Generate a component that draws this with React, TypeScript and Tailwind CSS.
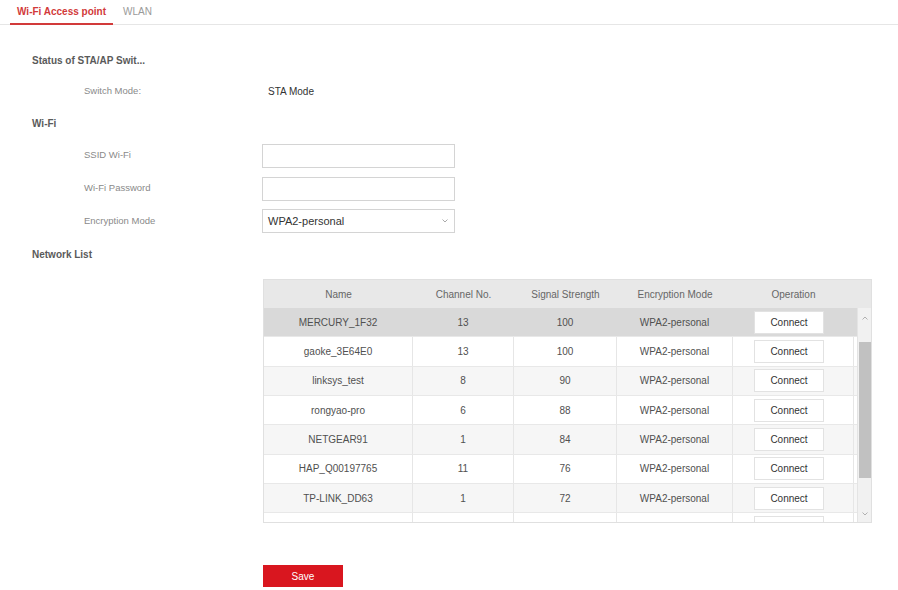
import React from "react";

const rows = [
  ["MERCURY_1F32", "13", "100"],
  ["gaoke_3E64E0", "13", "100"],
  ["linksys_test", "8", "90"],
  ["rongyao-pro", "6", "88"],
  ["NETGEAR91", "1", "84"],
  ["HAP_Q00197765", "11", "76"],
  ["TP-LINK_DD63", "1", "72"],
  ["", "", ""],
];

function Row({ r, i }: { r: string[]; i: number }) {
  const bg = i === 0 ? "bg-[#d9d9d9]" : i % 2 === 0 ? "bg-[#f6f6f6]" : "bg-white";
  const sep = i === 0 ? "border-r border-transparent" : "border-r border-[#e6e6e6]";
  return (
    <div className={`flex h-[29.33px] shrink-0 border-b border-[#e8e8e8] text-[10px] text-[#505050] ${bg}`}>
      <div className={`w-[149px] flex items-center justify-center ${sep}`}>{r[0]}</div>
      <div className={`w-[101px] flex items-center justify-center ${sep}`}>{r[1]}</div>
      <div className={`w-[103px] flex items-center justify-center ${sep}`}>{r[2]}</div>
      <div className={`w-[116px] flex items-center justify-center ${sep}`}>{r[0] ? "WPA2-personal" : ""}</div>
      <div className={`w-[121px] flex items-center pl-[21px] ${sep}`}>
        <div className="w-[70px] h-[23px] bg-white border border-[#e2e2e2] flex items-center justify-center text-[10px] text-[#333]">
          {r[0] ? "Connect" : ""}
        </div>
      </div>
      <div className="flex-1" />
    </div>
  );
}

export default function App() {
  return (
    <div className="w-[898px] h-[590px] bg-white overflow-hidden" style={{ fontFamily: '"Liberation Sans", Arial, sans-serif' }}>
      {/* tabs */}
      <div className="h-[25px] flex items-end border-b border-[#e6e6e6]">
        <div className="ml-[10px] w-[103px] h-[25px] flex items-center justify-center text-[10px] font-bold text-[#d23a3a] border-b-2 border-[#d23a3a] -mb-px">
          Wi-Fi Access point
        </div>
        <div className="ml-[10px] h-[25px] flex items-center text-[10px] text-[#9a9a9a]">WLAN</div>
      </div>

      <div className="pl-[32px] pt-[19px] text-[10px]">
        <div className="h-[32px] flex items-center font-bold text-[#5a5a5a]">Status of STA/AP Swit...</div>
        <div className="h-[31px] flex items-center">
          <div className="w-[230px] pl-[52px] text-[#8a8a8a] text-[9.5px]">Switch Mode:</div>
          <div className="pl-[6px] text-[#333]">STA Mode</div>
        </div>
        <div className="h-[32px] flex items-center font-bold text-[#5a5a5a]">Wi-Fi</div>
        <div className="h-[33px] flex items-center">
          <div className="w-[230px] pl-[52px] text-[#8a8a8a] text-[9.5px]">SSID Wi-Fi</div>
          <div className="w-[193px] h-[24px] border border-[#d4d4d4] bg-white" />
        </div>
        <div className="h-[33px] flex items-center">
          <div className="w-[230px] pl-[52px] text-[#8a8a8a] text-[9.5px]">Wi-Fi Password</div>
          <div className="w-[193px] h-[24px] border border-[#d4d4d4] bg-white" />
        </div>
        <div className="h-[32px] flex items-center">
          <div className="w-[230px] pl-[52px] text-[#8a8a8a] text-[9.5px]">Encryption Mode</div>
          <div className="w-[193px] h-[24px] border border-[#d4d4d4] bg-white flex items-center justify-between pl-[5px] pr-[6px]">
            <span className="text-[11px] text-[#333]">WPA2-personal</span>
            <svg width="6" height="4" viewBox="0 0 6 4"><path d="M0.5 0.5 L3 3 L5.5 0.5" fill="none" stroke="#aaa" strokeWidth="1" /></svg>
          </div>
        </div>
        <div className="h-[34px] flex items-center font-bold text-[#5a5a5a]">Network List</div>

        {/* table */}
        <div className="ml-[231px] mt-[8px] w-[609px] h-[244px] border border-[#e0e0e0] flex flex-col overflow-hidden">
          <div className="flex h-[28px] shrink-0 bg-[#e8e8e8] text-[10px] text-[#666]">
            <div className="w-[149px] flex items-center justify-center">Name</div>
            <div className="w-[101px] flex items-center justify-center">Channel No.</div>
            <div className="w-[103px] flex items-center justify-center">Signal Strength</div>
            <div className="w-[116px] flex items-center justify-center">Encryption Mode</div>
            <div className="w-[121px] flex items-center justify-center">Operation</div>
          </div>
          <div className="flex flex-1 min-h-0">
            <div className="w-[593px] flex flex-col overflow-hidden">
              {rows.map((r, i) => (
                <Row key={i} r={r} i={i} />
              ))}
            </div>
            <div className="flex-1 bg-[#f1f1f1] border-l border-[#e4e4e4] flex flex-col items-center">
              <div className="h-[20px] flex items-center justify-center">
                <svg width="6" height="4" viewBox="0 0 6 4"><path d="M0.5 3.5 L3 1 L5.5 3.5" fill="none" stroke="#b0b0b0" strokeWidth="1" /></svg>
              </div>
              <div className="mt-[14px] w-[12px] h-[136px] bg-[#c1c1c1]" />
              <div className="flex-1" />
              <div className="h-[16px] flex items-center justify-center">
                <svg width="6" height="4" viewBox="0 0 6 4"><path d="M0.5 0.5 L3 3 L5.5 0.5" fill="none" stroke="#b0b0b0" strokeWidth="1" /></svg>
              </div>
            </div>
          </div>
        </div>

        <div className="ml-[231px] mt-[42px] w-[80px] h-[22px] bg-[#d9161f] text-white text-[10px] flex items-center justify-center">
          Save
        </div>
      </div>
    </div>
  );
}
